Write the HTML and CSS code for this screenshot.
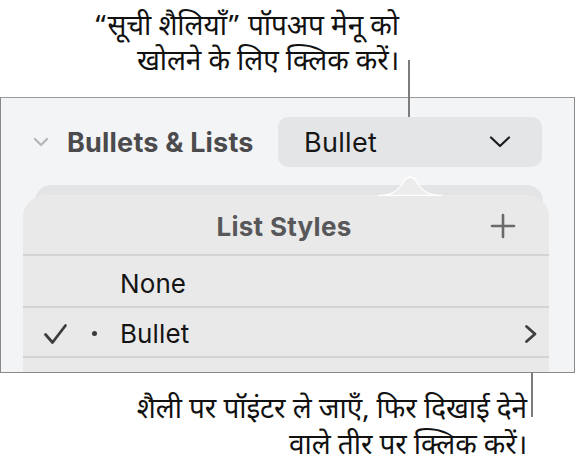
FILE: index.html
```html
<!DOCTYPE html>
<html lang="hi">
<head>
<meta charset="utf-8">
<link rel="stylesheet" href="styles.css">
</head>
<body>
<div class="page">
  <p class="caption caption-top">“सूची शैलियाँ” पॉपअप मेनू को<br>खोलने के लिए क्लिक करें।</p>
  <div class="panel">
    <div class="header-row">
      <svg class="disclosure" width="16" height="10" viewBox="0 0 16 10"><path d="M2 2 L8 8 L14 2" fill="none" stroke="#b4b5b8" stroke-width="2.2" stroke-linecap="round" stroke-linejoin="round"/></svg>
      <span class="section-title">Bullets &amp; Lists</span>
      <div class="popup">
        <span class="popup-label">Bullet</span>
        <svg class="popup-chevron" width="22" height="14" viewBox="0 0 22 14"><path d="M2 2.5 L11 11 L20 2.5" fill="none" stroke="#1c1c1c" stroke-width="2.2" stroke-linecap="round" stroke-linejoin="round"/></svg>
      </div>
    </div>
    <div class="popover">
      <svg class="popover-arrow" width="64" height="23" viewBox="0 0 64 23"><path d="M0 22.5 C14 22.5 20 18 26 8 C29 3 35 3 38 8 C44 18 50 22.5 64 22.5 Z" fill="#ececec" stroke="#ffffff" stroke-width="1.4"/></svg>
      <div class="card">
        <div class="card-head">
          <span class="card-title">List Styles</span>
          <svg class="plus" width="26" height="26" viewBox="0 0 26 26"><path d="M13 2 V24 M2 13 H24" stroke="#6a6a6a" stroke-width="2.6" stroke-linecap="round"/></svg>
        </div>
        <div class="item item-none">
          <span class="check"></span>
          <span class="dot"></span>
          <span class="item-label">None</span>
        </div>
        <div class="item item-bullet">
          <span class="check"><svg width="25" height="22" viewBox="0 0 25 22"><path d="M2.5 11.5 L9.5 19.5 L22.5 2.5" fill="none" stroke="#3d3d3d" stroke-width="2.8" stroke-linecap="round" stroke-linejoin="round"/></svg></span>
          <span class="dot"><span class="dot-mark"></span></span>
          <span class="item-label">Bullet</span>
          <svg class="arrow-right" width="14" height="20" viewBox="0 0 14 20"><path d="M2.5 2.5 L11 10 L2.5 17.5" fill="none" stroke="#3f3f3f" stroke-width="2.8" stroke-linecap="round" stroke-linejoin="round"/></svg>
        </div>
        <div class="item item-empty"></div>
      </div>
    </div>
  </div>
  <p class="caption caption-bottom">शैली पर पॉइंटर ले जाएँ, फिर दिखाई देने<br>वाले तीर पर क्लिक करें।</p>
  <span class="leader leader-top"></span>
  <span class="leader leader-bottom"></span>
</div>
</body>
</html>
```
FILE: styles.css
```css
html, body {
  margin: 0;
  padding: 0;
  background: #ffffff;
}
.page {
  position: relative;
  width: 577px;
  height: 475px;
  overflow: hidden;
  font-family: "Inter", "Noto Sans Devanagari", "Noto Sans", sans-serif;
}
.caption {
  margin: 0;
  font-family: "Noto Sans Devanagari", "Lohit Devanagari", "Noto Sans", sans-serif;
  font-size: 28px;
  line-height: 35px;
  color: #111111;
  text-align: right;
  letter-spacing: -0.1px;
}
.caption-top {
  padding: 11px 178px 0 0;
  height: 90px;
  box-sizing: border-box;
}
.panel {
  margin-top: 7px;
  width: 575px;
  height: 276px;
  box-sizing: border-box;
  border: 1.5px solid #8a8a8a;
  border-top-color: #9a9a9a;
  background: #f3f4f6;
  overflow: hidden;
}
.header-row {
  display: flex;
  align-items: center;
  height: 50px;
  margin-top: 19px;
  padding-left: 32px;
  padding-right: 32px;
}
.disclosure {
  margin-right: 18px;
}
.section-title {
  font-weight: 700;
  font-size: 27px;
  color: #4b4b4d;
  letter-spacing: 0.2px;
}
.popup {
  margin-left: auto;
  width: 264px;
  height: 50px;
  box-sizing: border-box;
  border-radius: 10px;
  background: #e4e5e7;
  display: flex;
  align-items: center;
  padding: 0 31px 0 26px;
}
.popup-label {
  font-size: 27px;
  color: #161616;
  letter-spacing: 0.3px;
}
.popup-chevron {
  margin-left: auto;
}
.popover {
  position: relative;
  margin-left: 22px;
  width: 526px;
  margin-top: 6px;
}
.popover::before {
  content: "";
  position: absolute;
  left: 12px;
  right: 6px;
  top: 12px;
  height: 60px;
  border-radius: 16px 16px 0 0;
  background: #e3e4e6;
}
.popover-arrow {
  position: relative;
  display: block;
  margin-left: 355px;
  margin-bottom: -1px;
  z-index: 2;
}
.card {
  position: relative;
  z-index: 1;
  background: #e9e9e9;
  border-radius: 22px 22px 0 0;
}
.card-head {
  height: 61px;
  box-sizing: border-box;
  padding-top: 3px;
  display: flex;
  align-items: center;
  justify-content: center;
  position: relative;
  border-bottom: 2px solid #d3d3d3;
}
.card-title {
  font-weight: 700;
  font-size: 26px;
  color: #58585a;
  letter-spacing: 0.3px;
  margin-left: -4px;
}
.plus {
  position: absolute;
  right: 33px;
  top: 18px;
}
.item {
  box-sizing: border-box;
  padding-top: 4px;
  display: flex;
  align-items: center;
  border-bottom: 2px solid #d3d3d3;
}
.item-none {
  height: 52px;
}
.item-bullet {
  height: 50px;
  padding-top: 3px;
}
.check {
  width: 25px;
  height: 22px;
  margin-left: 20px;
  display: flex;
}
.dot {
  width: 52px;
  display: flex;
  justify-content: center;
}
.dot-mark {
  width: 5px;
  height: 5px;
  border-radius: 50%;
  background: #3a3a3a;
}
.item-label {
  font-size: 26px;
  color: #141414;
  letter-spacing: 0.1px;
}
.arrow-right {
  margin-left: auto;
  margin-right: 11px;
}
.item-empty {
  height: 40px;
  border-bottom: none;
}
.caption-bottom {
  padding: 20px 50px 0 0;
  line-height: 36px;
}
.leader {
  position: absolute;
  width: 2px;
  background: #7d7d7d;
}
.leader-top {
  left: 408px;
  top: 60px;
  height: 57px;
}
.leader-bottom {
  left: 531px;
  top: 346px;
  height: 71px;
}
```
